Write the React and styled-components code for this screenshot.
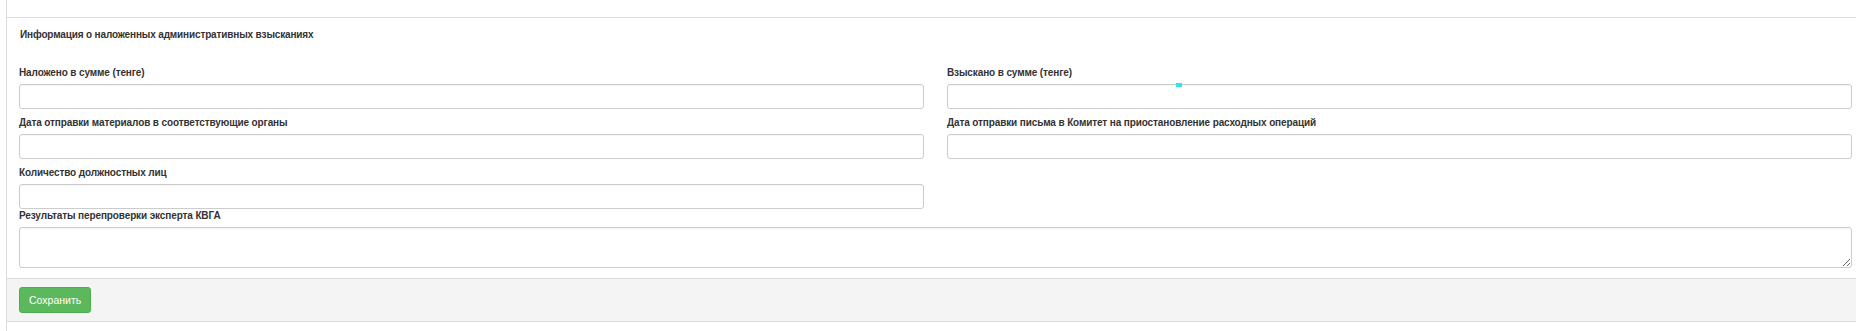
import styled, { createGlobalStyle } from 'styled-components'

const GlobalStyle = createGlobalStyle`
  html, body {
    margin: 0;
    padding: 0;
    background: #ffffff;
    overflow: hidden;
  }
  body {
    font-family: "Liberation Sans", Arial, sans-serif;
    color: #333333;
  }
`

const Page = styled.div`
  width: 1856px;
  height: 331px;
  overflow: hidden;
`

const Panel = styled.div`
  width: 1857px;
  margin-left: 6px;
  border-left: 1px solid #dddddd;
  border-right: 1px solid #dddddd;
  border-bottom: ${(p) => (p.$open ? 'none' : '1px solid #dddddd')};
  height: ${(p) => (p.$open ? '20px' : 'auto')};
`

const Heading = styled.div`
  height: 17px;
  border-bottom: 1px solid #dddddd;
`

const Body = styled.div`
  padding: 10px 12px 10px 12px;
`

const Title = styled.div`
  font-size: 10px;
  font-weight: bold;
  line-height: 14px;
  letter-spacing: -0.15px;
  padding-left: 1px;
  margin-bottom: 24px;
`

const Grid = styled.div`
  display: grid;
  grid-template-columns: 1fr 1fr;
  column-gap: 23px;
  position: relative;
`

const Field = styled.div`
  grid-column: ${(p) => (p.$wide ? '1 / span 2' : 'auto')};
  margin-bottom: ${(p) => (p.$tight ? '0' : '7px')};
`

const Label = styled.label`
  display: block;
  font-size: 10px;
  font-weight: bold;
  line-height: 14px;
  letter-spacing: -0.12px;
  margin-bottom: 4px;
`

const Input = styled.input`
  display: block;
  box-sizing: border-box;
  width: 100%;
  height: 25px;
  margin: 0;
  border: 1px solid #cccccc;
  border-radius: 3px;
  background: #ffffff;
  box-shadow: inset 0 1px 1px rgba(0, 0, 0, 0.04);
`

const TextArea = styled.textarea`
  display: block;
  box-sizing: border-box;
  width: 100%;
  height: 41px;
  margin: 0;
  border: 1px solid #cccccc;
  border-radius: 3px;
  background: #ffffff;
  box-shadow: inset 0 1px 1px rgba(0, 0, 0, 0.04);
`

const Spacer = styled.div``

const Footer = styled.div`
  background: #f4f4f4;
  border-top: 1px solid #dddddd;
  padding: 8px 12px;
`

const Button = styled.button`
  display: block;
  height: 26px;
  padding: 0 9px;
  border: 1px solid #4cae4c;
  border-radius: 3px;
  background: #5cb85c;
  color: #ffffff;
  font-family: "Liberation Sans", Arial, sans-serif;
  font-size: 10.5px;
  line-height: 24px;
`

const Mark = styled.span`
  position: absolute;
  left: 1157px;
  top: 17px;
  width: 6px;
  height: 4px;
  background: #2fe3f0;
`

const fields = [
  { label: 'Наложено в сумме (тенге)' },
  { label: 'Взыскано в сумме (тенге)' },
  { label: 'Дата отправки материалов в соответствующие органы' },
  { label: 'Дата отправки письма в Комитет на приостановление расходных операций' },
]

const App = () => (
  <Page>
    <GlobalStyle />
    <Panel>
      <Heading />
      <Body>
        <Title>Информация о наложенных административных взысканиях</Title>
        <Grid>
          {fields.map((f) => (
            <Field key={f.label}>
              <Label>{f.label}</Label>
              <Input type="text" />
            </Field>
          ))}
          <Field $tight>
            <Label>Количество должностных лиц</Label>
            <Input type="text" />
          </Field>
          <Spacer />
          <Field $wide $tight>
            <Label>Результаты перепроверки эксперта КВГА</Label>
            <TextArea />
          </Field>
          <Mark />
        </Grid>
      </Body>
      <Footer>
        <Button type="button">Сохранить</Button>
      </Footer>
    </Panel>
    <Panel $open />
  </Page>
)

export default App
